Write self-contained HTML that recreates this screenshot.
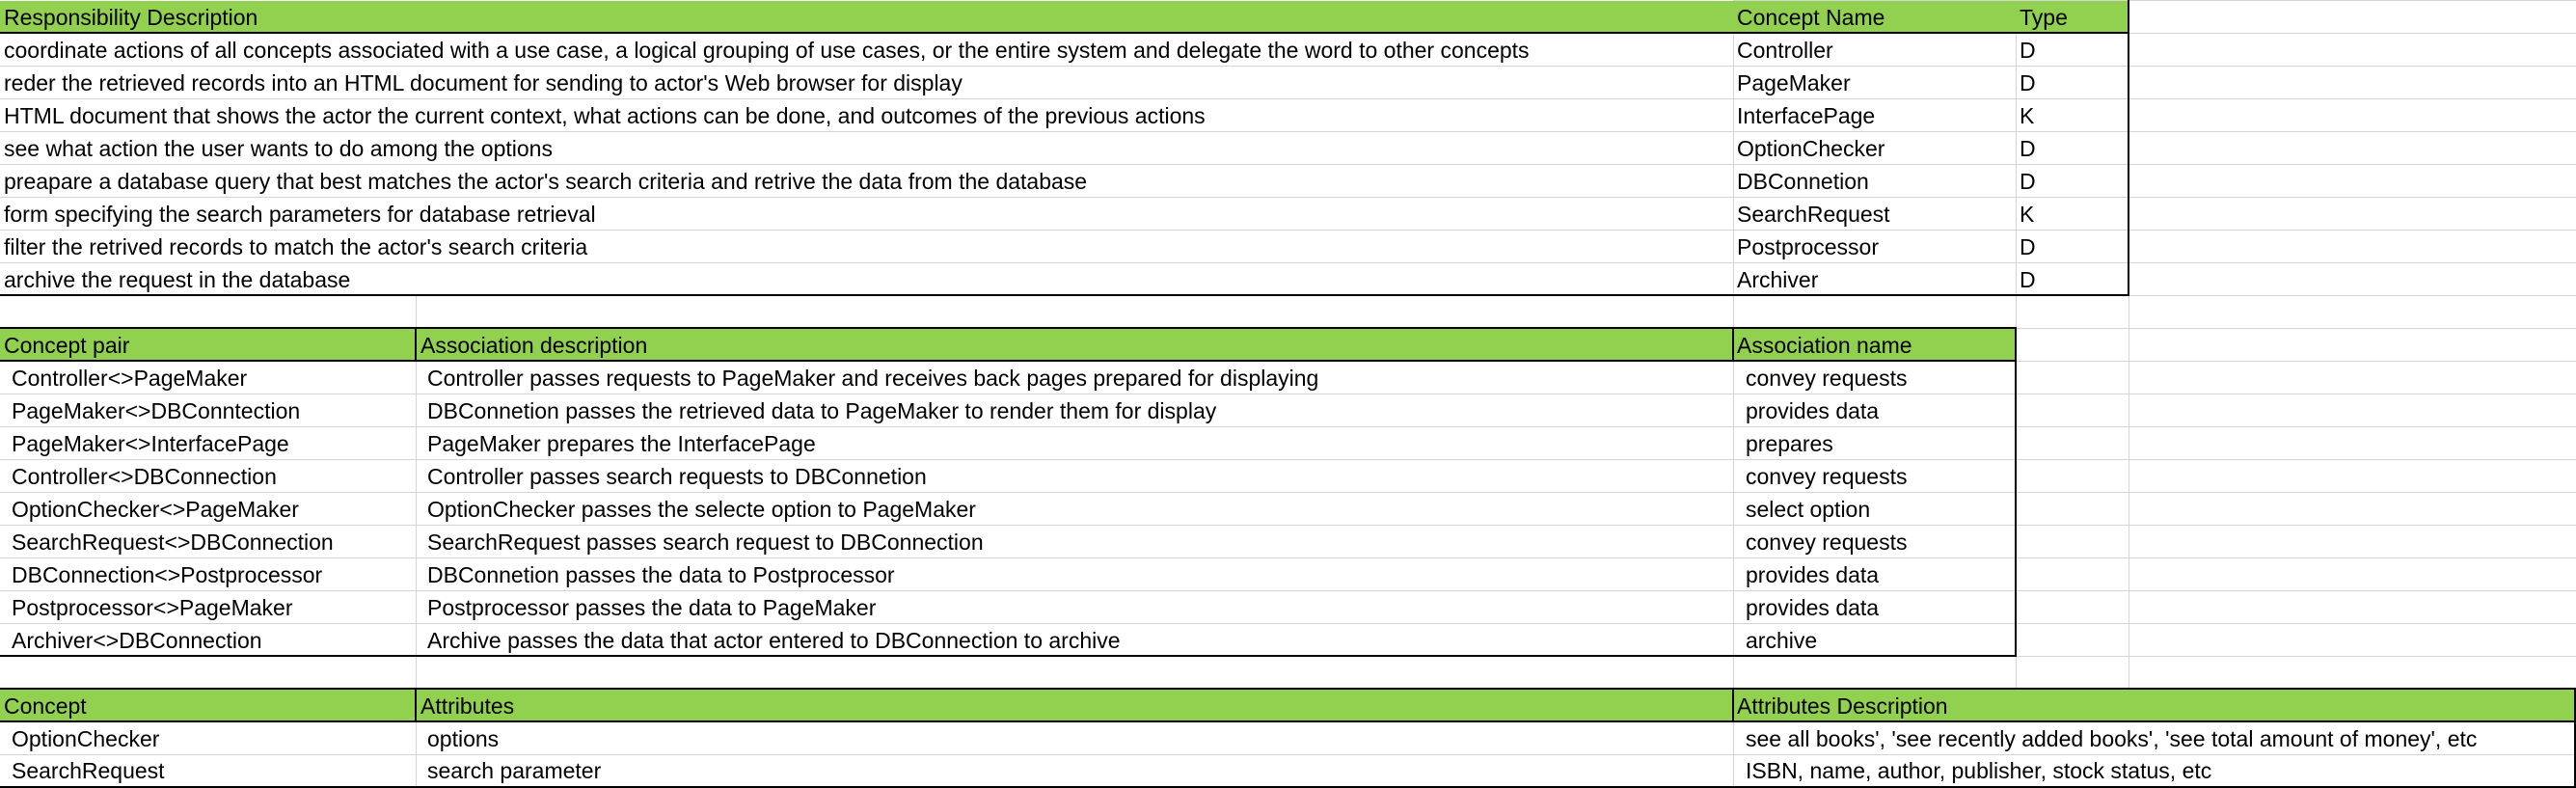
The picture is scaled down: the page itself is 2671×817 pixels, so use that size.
<!DOCTYPE html>
<html><head><meta charset="utf-8"><style>
*{margin:0;padding:0;box-sizing:border-box}
body{width:2671px;height:817px;background:#fff;position:relative;overflow:hidden;font-family:"Liberation Sans","Noto Sans CJK KR",sans-serif;font-size:23px;color:#000}
.h{position:absolute;left:0;width:2671px;height:1px;background:#d4d4d4}
.v{position:absolute;top:0;height:817px;width:1px;background:#d4d4d4}
.g{position:absolute;background:#92d050}
.bl{position:absolute;background:#000}
.gl{position:absolute;background:#d4d4d4}
.t{position:absolute;height:34px;line-height:35px;white-space:nowrap}
</style></head><body>
<div class="h" style="top:0"></div><div class="h" style="top:34px"></div><div class="h" style="top:68px"></div><div class="h" style="top:102px"></div><div class="h" style="top:136px"></div><div class="h" style="top:170px"></div><div class="h" style="top:204px"></div><div class="h" style="top:238px"></div><div class="h" style="top:272px"></div><div class="h" style="top:306px"></div><div class="h" style="top:340px"></div><div class="h" style="top:374px"></div><div class="h" style="top:408px"></div><div class="h" style="top:442px"></div><div class="h" style="top:476px"></div><div class="h" style="top:510px"></div><div class="h" style="top:544px"></div><div class="h" style="top:578px"></div><div class="h" style="top:612px"></div><div class="h" style="top:646px"></div><div class="h" style="top:680px"></div><div class="h" style="top:714px"></div><div class="h" style="top:748px"></div><div class="h" style="top:782px"></div>
<div class="v" style="left:431px"></div><div class="v" style="left:1797px"></div><div class="v" style="left:2090px"></div><div class="v" style="left:2207px"></div>

<div style="position:absolute;left:0;top:0;width:1797px;height:306px;background:#fff"></div>
<div class="g" style="left:0;top:1px;width:2207px;height:33px"></div>
<div style="position:absolute;left:0;top:35px;width:2207px;height:271px;background:#fff"></div>
<div class="gl" style="left:0;top:68px;width:2207px;height:1px"></div><div class="gl" style="left:0;top:102px;width:2207px;height:1px"></div><div class="gl" style="left:0;top:136px;width:2207px;height:1px"></div><div class="gl" style="left:0;top:170px;width:2207px;height:1px"></div><div class="gl" style="left:0;top:204px;width:2207px;height:1px"></div><div class="gl" style="left:0;top:238px;width:2207px;height:1px"></div><div class="gl" style="left:0;top:272px;width:2207px;height:1px"></div>
<div class="gl" style="left:1797px;top:34px;width:1px;height:272px"></div><div class="gl" style="left:2090px;top:34px;width:1px;height:272px"></div>
<div class="bl" style="left:0;top:33px;width:2207px;height:2px"></div>
<div class="bl" style="left:0;top:305px;width:2207px;height:2px"></div>
<div class="bl" style="left:2206px;top:0;width:2px;height:307px"></div>
<div class="t" style="left:4px;top:1px">Responsibility Description</div>
<div class="t" style="left:1801px;top:1px">Concept Name</div>
<div class="t" style="left:2094px;top:1px">Type</div>
<div class="t" style="left:4px;top:35px">coordinate actions of all concepts associated with a use case, a logical grouping of use cases, or the entire system and delegate the word to other concepts</div>
<div class="t" style="left:4px;top:69px">reder the retrieved records into an HTML document for sending to actor's Web browser for display</div>
<div class="t" style="left:4px;top:103px">HTML document that shows the actor the current context, what actions can be done, and outcomes of the previous actions</div>
<div class="t" style="left:4px;top:137px">see what action the user wants to do among the options</div>
<div class="t" style="left:4px;top:171px">preapare a database query that best matches the actor's search criteria and retrive the data from the database</div>
<div class="t" style="left:4px;top:205px">form specifying the search parameters for database retrieval</div>
<div class="t" style="left:4px;top:239px">filter the retrived records to match the actor's search criteria</div>
<div class="t" style="left:4px;top:273px">archive the request in the database</div>
<div class="t" style="left:1801px;top:35px">Controller</div><div class="t" style="left:2094px;top:35px">D</div>
<div class="t" style="left:1801px;top:69px">PageMaker</div><div class="t" style="left:2094px;top:69px">D</div>
<div class="t" style="left:1801px;top:103px">InterfacePage</div><div class="t" style="left:2094px;top:103px">K</div>
<div class="t" style="left:1801px;top:137px">OptionChecker</div><div class="t" style="left:2094px;top:137px">D</div>
<div class="t" style="left:1801px;top:171px">DBConnetion</div><div class="t" style="left:2094px;top:171px">D</div>
<div class="t" style="left:1801px;top:205px">SearchRequest</div><div class="t" style="left:2094px;top:205px">K</div>
<div class="t" style="left:1801px;top:239px">Postprocessor</div><div class="t" style="left:2094px;top:239px">D</div>
<div class="t" style="left:1801px;top:273px">Archiver</div><div class="t" style="left:2094px;top:273px">D</div>

<div class="g" style="left:0;top:340px;width:2090px;height:34px"></div>
<div class="bl" style="left:0;top:339px;width:2090px;height:2px"></div>
<div class="bl" style="left:0;top:373px;width:2090px;height:2px"></div>
<div class="bl" style="left:0;top:679px;width:2090px;height:2px"></div>
<div class="bl" style="left:2089px;top:339px;width:2px;height:342px"></div>
<div class="bl" style="left:430px;top:340px;width:2px;height:34px"></div>
<div class="bl" style="left:1796px;top:340px;width:2px;height:34px"></div>
<div class="t" style="left:4px;top:341px">Concept pair</div>
<div class="t" style="left:436px;top:341px">Association description</div>
<div class="t" style="left:1801px;top:341px">Association name</div>
<div class="t" style="left:12px;top:375px">Controller&lt;&gt;PageMaker</div>
<div class="t" style="left:12px;top:409px">PageMaker&lt;&gt;DBConntection</div>
<div class="t" style="left:12px;top:443px">PageMaker&lt;&gt;InterfacePage</div>
<div class="t" style="left:12px;top:477px">Controller&lt;&gt;DBConnection</div>
<div class="t" style="left:12px;top:511px">OptionChecker&lt;&gt;PageMaker</div>
<div class="t" style="left:12px;top:545px">SearchRequest&lt;&gt;DBConnection</div>
<div class="t" style="left:12px;top:579px">DBConnection&lt;&gt;Postprocessor</div>
<div class="t" style="left:12px;top:613px">Postprocessor&lt;&gt;PageMaker</div>
<div class="t" style="left:12px;top:647px">Archiver&lt;&gt;DBConnection</div>
<div class="t" style="left:443px;top:375px">Controller passes requests to PageMaker and receives back pages prepared for displaying</div>
<div class="t" style="left:443px;top:409px">DBConnetion passes the retrieved data to PageMaker to render them for display</div>
<div class="t" style="left:443px;top:443px">PageMaker prepares the InterfacePage</div>
<div class="t" style="left:443px;top:477px">Controller passes search requests to DBConnetion</div>
<div class="t" style="left:443px;top:511px">OptionChecker passes the selecte option to PageMaker</div>
<div class="t" style="left:443px;top:545px">SearchRequest passes search request to DBConnection</div>
<div class="t" style="left:443px;top:579px">DBConnetion passes the data to Postprocessor</div>
<div class="t" style="left:443px;top:613px">Postprocessor passes the data to PageMaker</div>
<div class="t" style="left:443px;top:647px">Archive passes the data that actor entered to DBConnection to archive</div>
<div class="t" style="left:1810px;top:375px">convey requests</div>
<div class="t" style="left:1810px;top:409px">provides data</div>
<div class="t" style="left:1810px;top:443px">prepares</div>
<div class="t" style="left:1810px;top:477px">convey requests</div>
<div class="t" style="left:1810px;top:511px">select option</div>
<div class="t" style="left:1810px;top:545px">convey requests</div>
<div class="t" style="left:1810px;top:579px">provides data</div>
<div class="t" style="left:1810px;top:613px">provides data</div>
<div class="t" style="left:1810px;top:647px">archive</div>

<div style="position:absolute;left:1798px;top:749px;width:871px;height:66px;background:#fff"></div>
<div class="gl" style="left:0;top:782px;width:2671px;height:1px"></div>
<div class="g" style="left:0;top:714px;width:2671px;height:34px"></div>
<div class="bl" style="left:0;top:713px;width:2671px;height:2px"></div>
<div class="bl" style="left:0;top:747px;width:2671px;height:2px"></div>
<div class="bl" style="left:0;top:815px;width:2671px;height:2px"></div>
<div class="bl" style="left:2669px;top:713px;width:2px;height:104px"></div>
<div class="bl" style="left:430px;top:714px;width:2px;height:34px"></div>
<div class="bl" style="left:1796px;top:714px;width:2px;height:34px"></div>
<div class="t" style="left:4px;top:715px">Concept</div>
<div class="t" style="left:436px;top:715px">Attributes</div>
<div class="t" style="left:1801px;top:715px">Attributes Description</div>
<div class="t" style="left:12px;top:749px">OptionChecker</div>
<div class="t" style="left:12px;top:782px">SearchRequest</div>
<div class="t" style="left:443px;top:749px">options</div>
<div class="t" style="left:443px;top:782px">search parameter</div>
<div class="t" style="left:1810px;top:749px">see all books', 'see recently added books', 'see total amount of money', etc</div>
<div class="t" style="left:1810px;top:782px">ISBN, name, author, publisher, stock status, etc</div>
</body></html>
